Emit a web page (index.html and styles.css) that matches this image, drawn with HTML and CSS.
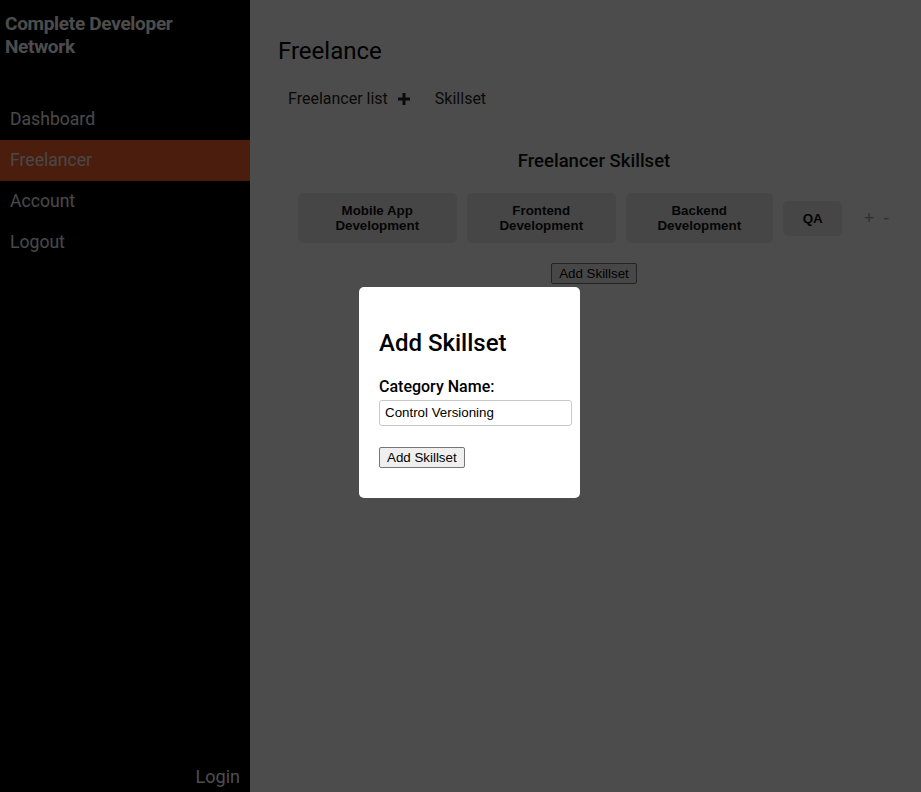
FILE: index.html
```html
<!DOCTYPE html>
<html>
<head>
<meta charset="utf-8">
<link rel="stylesheet" href="styles.css">
</head>
<body>
<div class="app">
  <aside class="sidebar">
    <div class="brand">Complete Developer Network</div>
    <nav class="nav">
      <a class="nav-item">Dashboard</a>
      <a class="nav-item active">Freelancer</a>
      <a class="nav-item">Account</a>
      <a class="nav-item">Logout</a>
    </nav>
    <div class="login">Login</div>
  </aside>
  <main class="main">
    <h1 class="page-title">Freelance</h1>
    <div class="tabs">
      <span class="tab">Freelancer list</span>
      <svg class="tab-plus" width="12" height="12" viewBox="0 0 12 12"><rect x="4.5" y="0" width="3" height="12" fill="#222"/><rect x="0" y="4.5" width="12" height="3" fill="#222"/></svg>
      <span class="tab tab-skill">Skillset</span>
    </div>
    <section class="skillset">
      <h2 class="skill-title">Freelancer Skillset</h2>
      <div class="cards">
        <div class="card card-mobile">Mobile App Development</div>
        <div class="card card-front">Frontend Development</div>
        <div class="card card-back">Backend Development</div>
        <div class="card card-qa">QA</div>
        <span class="ctrl ctrl-plus">+</span>
        <span class="ctrl ctrl-minus">-</span>
      </div>
      <div class="add-row"><button class="btn">Add Skillset</button></div>
    </section>
  </main>
</div>
<div class="overlay"></div>
<div class="modal">
  <h2 class="modal-title">Add Skillset</h2>
  <label class="modal-label">Category Name:</label>
  <input class="modal-input" type="text" value="Control Versioning">
  <div class="modal-actions"><button class="btn">Add Skillset</button></div>
</div>
</body>
</html>
```
FILE: styles.css
```css
html, body {
  margin: 0;
  padding: 0;
  height: 100%;
}
body {
  font-family: Roboto, "Liberation Sans", sans-serif;
  background: #fff;
  overflow: hidden;
}
.app {
  display: flex;
  height: 792px;
}
.sidebar {
  width: 250px;
  flex: none;
  background: #000;
  color: #fff;
  display: flex;
  flex-direction: column;
}
.brand {
  font-weight: 700;
  font-size: 19px;
  line-height: 23px;
  padding: 12px 60px 0 5px;
  letter-spacing: -0.3px;
  height: 99px;
  box-sizing: border-box;
}
.nav {
  display: flex;
  flex-direction: column;
}
.nav-item {
  display: block;
  height: 41px;
  line-height: 41px;
  padding-left: 10px;
  font-size: 17.6px;
  color: #f2f2f2;
}
.nav-item.active {
  background: #f7622b;
}
.login {
  margin-top: auto;
  text-align: right;
  padding: 0 10px 1px 0;
  font-size: 18px;
  line-height: 28px;
}
.main {
  flex: 1;
  padding: 0 21px 0 28px;
  color: #000;
}
.page-title {
  font-size: 24px;
  font-weight: 400;
  line-height: 28px;
  margin: 37px 0 0 0;
}
.tabs {
  display: flex;
  align-items: center;
  margin-top: 24px;
  padding-left: 10px;
  height: 19px;
  font-size: 16px;
  color: #222;
}
.tab-plus {
  margin-left: 10px;
}
.tab-skill {
  margin-left: 25px;
}
.skillset {
  padding-left: 10px;
  margin-top: 42px;
}
.skill-title {
  margin: 0;
  text-align: center;
  font-size: 18.5px;
  font-weight: 500;
  line-height: 22px;
  color: #111;
}
.cards {
  display: flex;
  align-items: center;
  justify-content: center;
  gap: 10px;
  margin: 21px 0 0 -1px;
}
.card {
  background: #eaeaea;
  border-radius: 5px;
  padding: 10px 20px;
  box-sizing: border-box;
  text-align: center;
  font-family: "Liberation Sans", Arial, sans-serif;
  font-weight: 700;
  font-size: 13.333px;
  line-height: 15px;
  color: #111;
  flex: none;
}
.card-mobile { width: 159px; }
.card-front { width: 149px; }
.card-back { width: 147px; }
.card-qa { width: 59px; }
.ctrl {
  font-family: "Liberation Sans", Arial, sans-serif;
  font-size: 18px;
  line-height: 20px;
  color: #a0a0a0;
}
.ctrl-plus {
  margin-left: 12px;
}
.ctrl-minus {
  margin-left: -1px;
}
.add-row {
  text-align: center;
  margin-top: 20px;
}
.btn {
  font-family: "Liberation Sans", Arial, sans-serif;
  font-size: 13.333px;
  padding: 1px 7px;
  border: 1px solid #767676;
  border-radius: 2px;
  background: #efefef;
  color: #000;
  line-height: 17px;
}
.overlay {
  position: fixed;
  inset: 0;
  background: rgba(0, 0, 0, 0.7);
}
.modal {
  position: fixed;
  left: 359px;
  top: 287px;
  width: 221px;
  box-sizing: border-box;
  padding: 20px 20px 30px 20px;
  background: #fff;
  border-radius: 5px;
}
.modal-title {
  font-size: 24px;
  font-weight: 500;
  line-height: 28px;
  margin: 22px 0 20px 0;
  color: #000;
}
.modal-label {
  display: block;
  font-size: 16px;
  font-weight: 500;
  line-height: 19px;
  color: #000;
}
.modal-input {
  display: block;
  width: 100%;
  margin: 4px 0 0 0;
  padding: 5px;
  border: 1px solid #c8c8c8;
  border-radius: 3px;
  font-family: "Liberation Sans", Arial, sans-serif;
  font-size: 13.333px;
  line-height: 14px;
  color: #000;
}
.modal-actions {
  margin-top: 21px;
}
```
